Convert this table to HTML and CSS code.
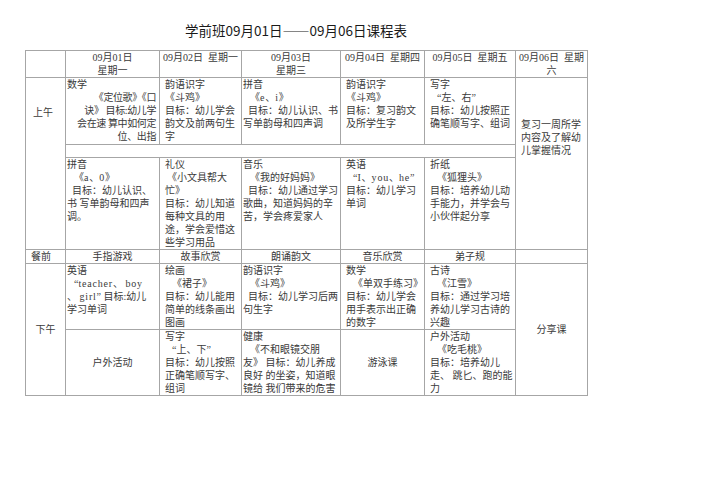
FILE: index.html
```html
<!DOCTYPE html>
<html lang="zh-CN">
<head>
<meta charset="utf-8">
<title>学前班课程表</title>
<link rel="stylesheet" href="styles.css">
</head>
<body>
<h1 class="title">学前班09月01日——09月06日课程表</h1>
<table class="sched">
  <colgroup>
    <col class="w-side"><col class="w-mon"><col class="w-tue"><col class="w-wed"><col class="w-thu"><col class="w-fri"><col class="w-sat">
  </colgroup>
  <tr class="hd">
    <td></td>
    <td class="c">09月01日<br>星期一</td>
    <td class="c">09月02日&nbsp;&nbsp;星期一</td>
    <td class="c">09月03日<br>星期三</td>
    <td class="c">09月04日&nbsp;&nbsp;星期四</td>
    <td class="c">09月05日&nbsp;&nbsp;星期五</td>
    <td class="c">09月06日&nbsp;&nbsp;星期<br>六</td>
  </tr>
  <tr class="ra">
    <td rowspan="3" class="side am">上午</td>
    <td class="pr">数学<div class="r tight">《定位歌》《口<br>诀》 目标:幼儿学<br>会在速 算中如何定<br>位、出指</div></td>
    <td class="p5">韵语识字<br>《斗鸡》<br>目标：幼儿学会<br>韵文及前两句生<br>字</td>
    <td>拼音<br><span class="in">《<span class="lat">e</span>、<span class="lat">i</span>》</span><br><span class="in1">目标：幼儿认识、书</span><br>写单韵母和四声调</td>
    <td class="p5">韵语识字<br>《斗鸡》<br>目标：复习韵文<br>及所学生字</td>
    <td class="p5">写字<br><span class="in">“左、右”</span><br>目标：幼儿按照正<br>确笔顺写字、组词</td>
    <td rowspan="3" class="p5 review">复习一周所学<br>内容及了解幼<br>儿掌握情况</td>
  </tr>
  <tr class="gap"><td colspan="5"></td></tr>
  <tr class="rb">
    <td>拼音<br><span class="in">《<span class="lat">a</span>、<span class="lat">0</span>》</span><br><span class="in1">目标：幼儿认识、</span><br>书 写单韵母和四声<br>调。</td>
    <td class="p5">礼仪<br><span class="in0">《小文具帮大</span><br>忙》<br>目标：幼儿知道<br>每种文具的用<br>途，学会爱惜这<br>些学习用品</td>
    <td>音乐<br><span class="in">《我的好妈妈》</span><br><span class="in1">目标：幼儿通过学习</span><br>歌曲，知道妈妈的辛<br>苦，学会疼爱家人</td>
    <td class="p5">英语<br><span class="in">“<span class="lat">I</span>、<span class="lat">you</span>、<span class="lat">he</span>”</span><br>目标：幼儿学习<br>单词</td>
    <td class="p5">折纸<br><span class="in">《狐狸头》</span><br>目标：培养幼儿动<br>手能力，并学会与<br>小伙伴起分享</td>
  </tr>
  <tr class="meal">
    <td class="side">餐前</td>
    <td class="c">手指游戏</td>
    <td class="c">故事欣赏</td>
    <td class="c">朗诵韵文</td>
    <td class="c">音乐欣赏</td>
    <td class="c">弟子规</td>
    <td></td>
  </tr>
  <tr class="rc">
    <td rowspan="2" class="c mid">下午</td>
    <td>英语<br><span class="in">“<span class="lat">teacher</span>、 <span class="lat">boy</span></span><br>、 <span class="lat">girl</span>” 目标:幼儿<br>学习单词</td>
    <td class="p5">绘画<br><span class="in">《裙子》</span><br>目标：幼儿能用<br>简单的线条画出<br>图画</td>
    <td>韵语识字<br><span class="in">《斗鸡》</span><br><span class="in1">目标：幼儿学习后两</span><br>句生字</td>
    <td class="p5">数学<br><span class="in">《单双手练习》</span><br>目标：幼儿学会<br>用手表示出正确<br>的数字</td>
    <td class="p5">古诗<br><span class="in">《江雪》</span><br>目标：通过学习培<br>养幼儿学习古诗的<br>兴趣</td>
    <td rowspan="2" class="c mid">分享课</td>
  </tr>
  <tr class="rd">
    <td class="c mid">户外活动</td>
    <td class="p5">写字<br><span class="in">“上、下”</span><br>目标：幼儿按照<br>正确笔顺写字、<br>组词</td>
    <td>健康<br><span class="in">《不和眼镜交朋</span><br>友》 目标：幼儿养成<br>良好 的坐姿，知道眼<br>镜给 我们带来的危害</td>
    <td class="c mid">游泳课</td>
    <td class="p5">户外活动<br><span class="in">《吃毛桃》</span><br>目标：培养幼儿<br>走、 跳匕、跑的能<br>力</td>
  </tr>
</table>
</body>
</html>
```

FILE: styles.css
```css
body {
  margin: 0;
  background: #ffffff;
  color: #3a3a3a;
  font-family: "Liberation Serif", "Noto Sans CJK SC", serif;
}

.title {
  margin: 20px 0 0 185px;
  font-family: "Noto Sans CJK SC", sans-serif;
  font-size: 13.5px;
  line-height: 20px;
  font-weight: normal;
  color: #1a1a1a;
}

.sched {
  margin: 10px 0 0 25px;
  border-collapse: collapse;
  table-layout: fixed;
  width: 562px;
  font-size: 10px;
  line-height: 13px;
}

.w-side { width: 40px; }
.w-mon { width: 94px; }
.w-tue { width: 82px; }
.w-wed { width: 99px; }
.w-thu { width: 84px; }
.w-fri { width: 91px; }
.w-sat { width: 72px; }

.sched td {
  border: 1px solid #a6a6a6;
  padding: 0 1px;
  vertical-align: top;
  white-space: nowrap;
}

.hd { height: 24px; }
.ra { height: 67px; }
.gap { height: 13px; }
.rb { height: 92px; }
.meal { height: 14px; }
.rc { height: 65px; }
.rd { height: 66px; }

.sched .c { text-align: center; }
.sched .mid { vertical-align: middle; }
.sched .p5 { padding-left: 5px; }
.sched .pr { padding-right: 3px; }
.sched .side { padding-left: 5px; }
.sched .am { padding-top: 28px; padding-left: 7px; }
.sched .review { padding-top: 40px; }

.r { text-align: right; }
.tight { letter-spacing: -0.4px; }
.in { padding-left: 7px; }
.in0 { padding-left: 2px; }
.in1 { padding-left: 5px; }
.lat { letter-spacing: 0.8px; }
```
